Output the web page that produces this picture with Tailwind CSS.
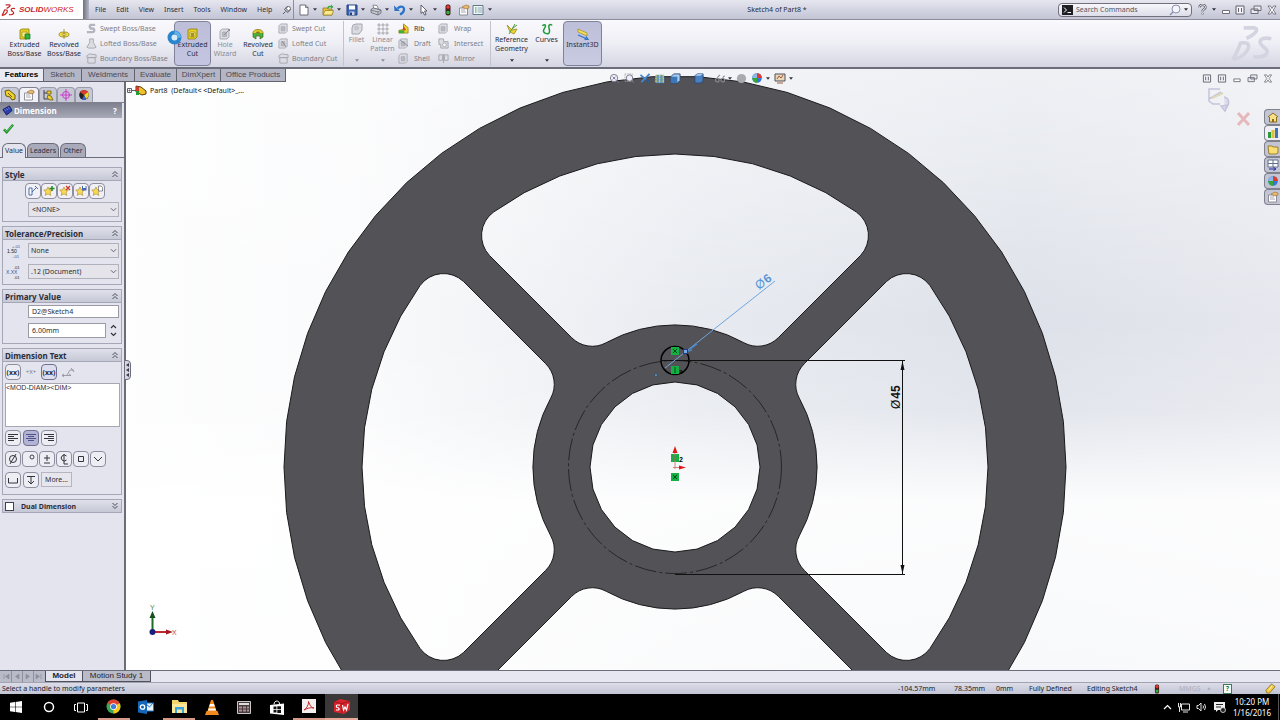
<!DOCTYPE html>
<html lang="en">
  <head>
    <meta charset="UTF-8">
    <meta name="viewport" content="width=device-width, initial-scale=1.0">
    <title>SolidWorks - Sketch4 of Part8</title>
    <script src="https://cdn.jsdelivr.net/npm/@tailwindcss/browser@4"></script>
  </head>

  <body class="h-screen flex flex-col overflow-hidden bg-[#e3e4ee] font-['Noto_Sans',sans-serif] text-[7px] leading-[9px] text-[#2c2d38]">

    <!-- shared icon shapes -->
    <svg class="hidden">
      <symbol id="caret" viewBox="0 0 5 3"><path d="M0 0h5L2.5 3z" fill="currentColor"/></symbol>
      <symbol id="chev" viewBox="0 0 8 5"><path d="M1 1l3 3 3-3" fill="none" stroke="#55565e"/></symbol>
      <symbol id="fold" viewBox="0 0 8 8"><path d="M1.500 4L4 1.500 6.500 4M1.500 7L4 4.500 6.500 7" fill="none" stroke="#4a4b58"/></symbol>
      <symbol id="cube" viewBox="0 0 12 12"><path d="M1 2l2-1h7v8l-2 2H1z" fill="#e8d21c" stroke="#8a7a14" stroke-width=".8"/><path d="M3 4h5v5H3z" fill="#f6ee8a" stroke="#a08c1c" stroke-width=".7"/></symbol>
      <symbol id="graybox" viewBox="0 0 12 12"><path d="M1 3l2-2h7v8l-2 2H1z" fill="#dcdde3" stroke="#a4a5ae" stroke-width=".9"/><path d="M3.500 4h4v4.500h-4z" fill="#b9bac3" stroke="#9fa0aa" stroke-width=".6"/></symbol>
      <symbol id="star" viewBox="0 0 12 12"><path d="M5 2l1.300 2.800 3 .3-2.200 2.100.7 3.200L5 8.800l-2.800 1.600.7-3.200L.7 5.100l3-.3z" fill="#f8d95a" stroke="#b8922a" stroke-width=".7"/></symbol>
      <symbol id="light" viewBox="0 0 6 12"><rect x=".5" y=".5" width="5" height="11" rx="2" fill="#4a2020"/><circle cx="3" cy="3" r="1.800" fill="#e23b2e"/><circle cx="3" cy="8.500" r="1.800" fill="#28b43c"/></symbol>
      <symbol id="ds" viewBox="0 0 16 14"><path d="M5 1.500h4c1.500.4.500 2.200-3 3.800M1 13c1.500-2.500 2.500-5 2.800-6 3-.4 3.600.8 2.400 2.800C5.200 11.500 3 12.700 1 13M15 5.500c-2-.6-4.500-.2-4 1.500s3 1.800 2.500 3.500-3 1.700-5 1.500" fill="none" stroke="currentColor" stroke-width="1.300"/></symbol>
      <symbol id="props" viewBox="0 0 12 12"><path d="M1.500 4h8v7h-8z" fill="#fff" stroke="#777883" stroke-width=".8"/><path d="M3 6h4M3 8h5" stroke="#8f90a0" stroke-width=".8"/><path d="M4 3l4-2 3 1v2L8 5z" fill="#e9b870" stroke="#976d2e" stroke-width=".6"/></symbol>
      <symbol id="ball" viewBox="0 0 12 12"><circle cx="6" cy="6" r="4.800" fill="#3a72d8"/><path d="M6 6V1.200A4.800 4.800 0 0 1 10.800 6z" fill="#e03c2c"/><path d="M6 6H1.200A4.800 4.800 0 0 0 6 10.800z" fill="#35a83a"/><path d="M6 6H1.200A4.800 4.800 0 0 1 6 1.200z" fill="#8bb8e8"/></symbol>
      <symbol id="restore" viewBox="0 0 12 10"><path d="M4 1h7v4.500H4zM1 4h7v4.500H1z" fill="#e9eaf1" stroke="#60616c" stroke-width=".9"/></symbol>
      <symbol id="tile" viewBox="0 0 10 10"><path d="M1 1h8v8H1zM3.500 3v4M6.500 3v4" fill="#f3f3f8" stroke="#60616c"/></symbol>
      <symbol id="mini" viewBox="0 0 10 10"><path d="M1.500 5.500h7v3h-7z" fill="#fff" stroke="#60616c" stroke-width=".9"/></symbol>
      <symbol id="cross" viewBox="0 0 10 10"><path d="M1 1h2.500L5 3.500 6.500 1H9L6.300 5 9 9H6.500L5 6.500 3.500 9H1l2.700-4z" fill="#fff" stroke="#60616c" stroke-width=".8"/></symbol>
    </svg>

    <!-- menu bar -->
    <header class="h-[20px] shrink-0 flex items-center border-b border-[#8d8e9c] bg-linear-to-b from-[#e6e6ef] to-[#c3c5d6] relative">
      <div class="w-[83px] self-stretch flex items-center gap-[3px] pl-px bg-white text-[#c8282c]">
        <svg class="w-[15px] h-[14px]"><use href="#ds"/></svg>
        <span class="text-[8px] font-['Liberation_Sans',sans-serif] italic"><b>SOLID</b>WORKS</span>
      </div>
      <div class="w-[6px] self-stretch bg-linear-to-r from-[#70727f] to-[#b5b7c6]"></div>
      <nav class="flex items-center gap-[10px] pl-[6px] w-[191px]">
        <a href="#">File</a>
        <a href="#">Edit</a>
        <a href="#">View</a>
        <a href="#">Insert</a>
        <a href="#">Tools</a>
        <a href="#">Window</a>
        <a href="#">Help</a>
      </nav>
      <button class="w-[14px] h-full flex items-center justify-center border-r border-[#8d8e9c]" aria-label="Pin"><svg class="w-[10px] h-[10px]" viewBox="0 0 10 10"><path d="M5 1.500l3.500 3-2.500 3-3.500-3zM1 9l2.500-2.500" fill="#dfe0e8" stroke="#55565f"/><circle cx="6.500" cy="3.500" r="2" fill="#fff" stroke="#55565f" stroke-width=".8"/></svg></button>
      <div class="flex items-center pl-[2px] text-[#3a3b46]">
        <button class="w-[24px] flex items-center gap-[3px] pl-[2px]" aria-label="New"><svg class="w-[12px] h-[12px]" viewBox="0 0 12 12"><path d="M2 1h5.500L10 3.500V11H2z" fill="#fff" stroke="#60616c" stroke-width=".9"/><path d="M7.500 1v2.500H10" fill="none" stroke="#60616c" stroke-width=".8"/></svg><svg class="w-[4px] h-[3px]"><use href="#caret"/></svg></button>
        <button class="w-[24px] flex items-center gap-[3px] pl-[2px]" aria-label="Open"><svg class="w-[12px] h-[12px]" viewBox="0 0 12 12"><path d="M1 4h4l1 1h4v6H1z" fill="#e9c53b" stroke="#93781d" stroke-width=".8"/><path d="M1 11l2-4.500h8.500L10 11z" fill="#fbe98b" stroke="#93781d" stroke-width=".7"/><path d="M5 4c1-2 2-2.500 4-2V.500L11.500 3 9 4.800V3.500c-2-.5-2 .5-2.500 1" fill="#36ab36"/></svg><svg class="w-[4px] h-[3px]"><use href="#caret"/></svg></button>
        <button class="w-[24px] flex items-center gap-[3px] pl-[2px]" aria-label="Save"><svg class="w-[12px] h-[12px]" viewBox="0 0 12 12"><path d="M1 1h10v10H1z" fill="#3c66b4" stroke="#20407e"/><path d="M3 1.500h6v4H3z" fill="#fff"/><path d="M3.500 7.500h5V11h-5z" fill="#c9d3e8"/><path d="M4 8.500h2V11H4z" fill="#20407e"/></svg><svg class="w-[4px] h-[3px]"><use href="#caret"/></svg></button>
        <button class="w-[24px] flex items-center gap-[3px] pl-[2px]" aria-label="Print"><svg class="w-[12px] h-[12px]" viewBox="0 0 12 12"><path d="M3 1l4 .5L8.500 5 4 5z" fill="#fff" stroke="#74757f" stroke-width=".8"/><path d="M1 5.500L3.500 4 11 6v3L8 11 1 8.500z" fill="#c9cad2" stroke="#60616c" stroke-width=".8"/><path d="M1 6l7 2 3-2M8 8v3" fill="none" stroke="#60616c" stroke-width=".7"/></svg><svg class="w-[4px] h-[3px]"><use href="#caret"/></svg></button>
        <button class="w-[24px] flex items-center gap-[3px] pl-[2px]" aria-label="Undo"><svg class="w-[12px] h-[12px]" viewBox="0 0 12 12"><path d="M3.500 4.500C7 1 10.500 3 10 6c-.3 2.200-2 3.500-4 4.500" fill="none" stroke="#2a72c8" stroke-width="2.200"/><path d="M0 1.500L6 7H.5z" fill="#2a72c8"/></svg><svg class="w-[4px] h-[3px]"><use href="#caret"/></svg></button>
        <button class="w-[24px] flex items-center gap-[3px] pl-[2px]" aria-label="Select"><svg class="w-[12px] h-[12px]" viewBox="0 0 12 12"><path d="M3 1l6 6H6.500L8 10.500l-1.500.6L5 7.800 3 9.500z" fill="#fff" stroke="#50515c" stroke-width=".9"/></svg><svg class="w-[4px] h-[3px]"><use href="#caret"/></svg></button>
        <button class="w-[15px] flex justify-center" aria-label="Rebuild"><svg class="w-[6px] h-[12px]"><use href="#light"/></svg></button>
        <button class="w-[17px] flex justify-center" aria-label="File properties"><svg class="w-[12px] h-[12px]"><use href="#props"/></svg></button>
        <button class="flex items-center gap-[4px]" aria-label="Options"><svg class="w-[12px] h-[12px]" viewBox="0 0 12 12"><path d="M1 1.500h10v9H1z" fill="#f4f8fa" stroke="#5d7a88"/><path d="M3 4h1.500M3 6h1.500M3 8h1.500" stroke="#2e9a4a" stroke-width="1.200"/><path d="M5.500 4H10M5.500 6H10M5.500 8H10" stroke="#7390a8" stroke-width=".8"/></svg><svg class="w-[4px] h-[3px]"><use href="#caret"/></svg></button>
      </div>
      <h1 class="flex-1 text-center pl-[4px]">Sketch4 of Part8 *</h1>
      <label class="w-[134px] h-[14px] flex items-center gap-[3px] px-[3px] rounded-sm border border-[#70717d] bg-linear-to-b from-[#f7f7fb] to-[#dcdde8]">
        <svg class="w-[11px] h-[10px] shrink-0" viewBox="0 0 11 10"><path d="M0 0h11v10H0z" fill="#1e1f24"/><path d="M2 2.500L4.500 5 2 7.500M5.500 7.500H9" fill="none" stroke="#fff"/></svg>
        <input type="text" placeholder="Search Commands" class="flex-1 min-w-0 bg-transparent placeholder-[#555661] focus:outline-none">
        <svg class="w-[12px] h-[12px] shrink-0" viewBox="0 0 12 12"><circle cx="7" cy="5" r="4" fill="#f4f6fc" stroke="#8b91ad"/><path d="M4 8l-3 3" stroke="#8b91ad" stroke-width="1.500"/></svg>
        <svg class="w-[4px] h-[3px] shrink-0"><use href="#caret"/></svg>
      </label>
      <div class="flex items-center justify-between w-[84px] pl-[5px] ml-[1px] mr-[3px]">
        <button aria-label="Help" class="w-[9px]"><svg class="w-[9px] h-[11px]" viewBox="0 0 9 11"><path d="M1.500 3.500C1.500 0 7.500 0 7.500 3.200 7.500 5.500 4.500 5 4.500 7.500" fill="none" stroke="#60616c" stroke-width="2.400"/><path d="M1.500 3.500C1.500 0 7.500 0 7.500 3.200 7.500 5.500 4.500 5 4.500 7.500" fill="none" stroke="#fff" stroke-width=".9"/><circle cx="4.500" cy="9.700" r="1" fill="#fff" stroke="#60616c" stroke-width=".6"/></svg></button>
        <svg class="w-[4px] h-[3px]"><use href="#caret"/></svg>
        <button aria-label="Minimize"><svg class="w-[10px] h-[10px]"><use href="#mini"/></svg></button>
        <button aria-label="Tile"><svg class="w-[10px] h-[10px]"><use href="#tile"/></svg></button>
        <button aria-label="Restore"><svg class="w-[12px] h-[10px]"><use href="#restore"/></svg></button>
        <button aria-label="Close"><svg class="w-[10px] h-[10px]"><use href="#cross"/></svg></button>
      </div>
    </header>

    <!-- ribbon -->
    <section class="h-[49px] shrink-0 flex pl-[5px] py-px border-b-2 border-[#6c6d7a] bg-linear-to-b from-[#fafafd] via-[#eeeef5] to-[#d5d6e3] relative">
      <button class="w-[39px] pt-[7px] flex flex-col items-center"><svg class="w-[12px] h-[12px]"><use href="#cube"/><path d="M6 6h5v5H6z" fill="#2eb43c" stroke="#14701e" stroke-width=".7"/></svg>Extruded<br>Boss/Base</button>
      <button class="w-[40px] pt-[7px] flex flex-col items-center"><svg class="w-[12px] h-[12px]" viewBox="0 0 12 12"><ellipse cx="6" cy="6.500" rx="5" ry="2.500" fill="#f1da3a" stroke="#94801c" stroke-width=".8"/><ellipse cx="6" cy="6.500" rx="1.800" ry="1" fill="#fff" stroke="#94801c" stroke-width=".6"/><path d="M6 1v10" stroke="#8b8026" stroke-width=".7"/></svg>Revolved<br>Boss/Base</button>
      <div class="w-[90px] pl-[2px] flex flex-col justify-around text-[#7c7d88]">
        <button class="flex items-center gap-[3px]"><svg class="w-[11px] h-[11px]" viewBox="0 0 12 12"><path d="M10 2H5a3 3 0 0 0 0 4h2a2 2 0 0 1 0 4H1" fill="none" stroke="#b3b4bd" stroke-width="2.500"/></svg>Swept Boss/Base</button>
        <button class="flex items-center gap-[3px]"><svg class="w-[11px] h-[11px]" viewBox="0 0 12 12"><path d="M4 1h4v4l3 5-2 1H3l-2-1 3-5z" fill="#dcdde3" stroke="#a4a5ae"/></svg>Lofted Boss/Base</button>
        <button class="flex items-center gap-[3px]"><svg class="w-[11px] h-[11px]" viewBox="0 0 12 12"><path d="M1 3l3-2 7 1v3H1zM2 5h8v6H2z" fill="#dcdde3" stroke="#a4a5ae"/></svg>Boundary Boss/Base</button>
      </div>
      <button class="w-[37px] pt-[6px] flex flex-col items-center rounded-sm border border-[#80819a] bg-linear-to-b from-[#bdbfd9] to-[#c3c5e2]"><svg class="w-[12px] h-[12px]"><use href="#cube"/><path d="M4 5h3v4H4z" fill="#a8921c"/></svg>Extruded<br>Cut</button>
      <button class="w-[28px] pt-[7px] flex flex-col items-center text-[#8a8b96]"><svg class="w-[12px] h-[12px]"><use href="#graybox"/><path d="M11 1L5 7M9 1l2 2" stroke="#8d8e98"/></svg>Hole<br>Wizard</button>
      <button class="w-[38px] pt-[7px] flex flex-col items-center"><svg class="w-[12px] h-[12px]" viewBox="0 0 12 12"><ellipse cx="6" cy="4.500" rx="5" ry="3" fill="#e6cf28" stroke="#867416" stroke-width=".8"/><path d="M1 5v4l3 2V8h4v3l3-2V5" fill="#4eb03c" stroke="#3c6c1c" stroke-width=".7"/><ellipse cx="6" cy="4.500" rx="2" ry="1" fill="#8a781c"/></svg>Revolved<br>Cut</button>
      <div class="w-[67px] pl-[1px] flex flex-col justify-around text-[#7c7d88] border-r border-[#c2c3cf]">
        <button class="flex items-center gap-[3px]"><svg class="w-[11px] h-[11px]"><use href="#graybox"/></svg>Swept Cut</button>
        <button class="flex items-center gap-[3px]"><svg class="w-[11px] h-[11px]"><use href="#graybox"/><path d="M4 3l4 6" stroke="#8f909a"/></svg>Lofted Cut</button>
        <button class="flex items-center gap-[3px]"><svg class="w-[11px] h-[11px]" viewBox="0 0 12 12"><path d="M1 3l3-2 7 1v3H1zM2 5h8v6H2z" fill="#dcdde3" stroke="#a4a5ae"/></svg>Boundary Cut</button>
      </div>
      <button class="w-[25px] pt-[2px] flex flex-col items-center text-[#8a8b96]"><svg class="w-[12px] h-[12px]" viewBox="0 0 12 12"><path d="M1 11V5a4 4 0 0 1 4-4h6v6L8 11z" fill="#dcdde3" stroke="#a4a5ae"/><circle cx="5.500" cy="5" r="2.500" fill="#c4c5cd"/></svg>Fillet<svg class="w-[4px] h-[3px] mt-auto mb-[4px]"><use href="#caret"/></svg></button>
      <button class="w-[27px] pt-[2px] flex flex-col items-center text-[#8a8b96]"><svg class="w-[12px] h-[12px]" viewBox="0 0 12 12"><path d="M1 1h2v2H1zM5 1h2v2H5zM9 1h2v2H9zM1 5h2v2H1zM5 5h2v2H5zM9 5h2v2H9zM1 9h2v2H1zM5 9h2v2H5zM9 9h2v2H9z" fill="#ddd" stroke="#a4a5ae" stroke-width=".8"/></svg>Linear<br>Pattern<svg class="w-[4px] h-[3px] mt-auto mb-[4px]"><use href="#caret"/></svg></button>
      <div class="w-[42px] pl-[2px] flex flex-col justify-around text-[#7c7d88]">
        <button class="flex items-center gap-[5px] text-[#2c2d38]"><svg class="w-[11px] h-[11px]" viewBox="0 0 12 12"><path d="M1 8l5-1V1l5 4v6H1z" fill="#f0d424" stroke="#8c7a14" stroke-width=".8"/><path d="M1 8l6 0v3H1z" fill="#3caf3a"/><path d="M6 3l3 5H5z" fill="#d4452a"/></svg>Rib</button>
        <button class="flex items-center gap-[5px]"><svg class="w-[11px] h-[11px]"><use href="#graybox"/><path d="M2 2l8 6" stroke="#8f909a"/></svg>Draft</button>
        <button class="flex items-center gap-[5px]"><svg class="w-[11px] h-[11px]"><use href="#graybox"/></svg>Shell</button>
      </div>
      <div class="w-[53px] flex flex-col justify-around text-[#7c7d88] border-r border-[#c2c3cf]">
        <button class="flex items-center gap-[5px]"><svg class="w-[11px] h-[11px]"><use href="#graybox"/></svg>Wrap</button>
        <button class="flex items-center gap-[5px]"><svg class="w-[11px] h-[11px]" viewBox="0 0 12 12"><path d="M1 1h5v3h5v7H3V7H1z" fill="#dcdde3" stroke="#a4a5ae"/><circle cx="7" cy="7.500" r="2" fill="#fff" stroke="#a4a5ae"/></svg>Intersect</button>
        <button class="flex items-center gap-[5px]"><svg class="w-[11px] h-[11px]" viewBox="0 0 12 12"><path d="M1 2h4v6H1zM7 2h4v6H7zM6 1v10" fill="#dcdde3" stroke="#a4a5ae"/></svg>Mirror</button>
      </div>
      <button class="w-[41px] pt-[2px] flex flex-col items-center"><svg class="w-[12px] h-[12px]" viewBox="0 0 12 12"><path d="M1 2l5 5 5-1-3 5-4-2z" fill="#ecd52c" stroke="#8f7d18" stroke-width=".7"/><path d="M6 6l3-5M6 6l5-4M6 6L3 11" stroke="#4f9a3a"/></svg>Reference<br>Geometry<svg class="w-[4px] h-[3px] mt-auto mb-[4px]"><use href="#caret"/></svg></button>
      <button class="w-[29px] pt-[2px] flex flex-col items-center"><svg class="w-[12px] h-[12px]" viewBox="0 0 12 12"><path d="M1.500 3c1-2 3-1.500 3 0S2 6.500 2.500 8.500 8 12 8.500 9 7 4 8 2.500 10.500 1 11 2.500" fill="none" stroke="#1f9a38" stroke-width="1.500"/></svg>Curves<svg class="w-[4px] h-[3px] mt-auto mb-[4px]"><use href="#caret"/></svg></button>
      <button class="w-[39px] ml-[2px] pt-[6px] flex flex-col items-center rounded-sm border border-[#80819a] bg-linear-to-b from-[#bdbfd9] to-[#c9cbe2]"><svg class="w-[12px] h-[12px]" viewBox="0 0 12 12"><path d="M1 1l9 4v3L1 4z" fill="#f1df5c" stroke="#9b8a2a" stroke-width=".7"/><path d="M1 7l8 3.500M9 8.500l2 3-3.500-.3" fill="none" stroke="#2a72c8" stroke-width="1.300"/></svg>Instant3D</button>
      <!-- busy pointer -->
      <svg class="absolute left-[167px] top-[10px] w-[15px] h-[15px]" viewBox="0 0 15 15"><circle cx="7.500" cy="7.500" r="5" fill="#d6ecf8" stroke="#2b86cc" stroke-width="4"/><path d="M7.500 2.500a5 5 0 0 1 5 5" fill="none" stroke="#62b4ea" stroke-width="3"/></svg>
      <svg class="absolute right-[6px] top-0 w-[44px] h-[46px] text-[#d3d4df]"><use href="#ds"/></svg>
    </section>

    <main class="flex-1 min-h-0 flex relative">

      <!-- command manager tabs, laid over the panel and the graphics area -->
      <nav class="absolute left-0 top-0 z-10 flex h-[13px] font-['Liberation_Sans',sans-serif] text-[8px] leading-[12px] text-center text-[#484955]">
        <a href="#" class="w-[44px] bg-[#e9eaf2] border-b border-r border-[#62636f] font-bold text-black">Features</a>
        <a href="#" class="w-[38px] bg-[#b4b6c5] border-b border-r border-[#62636f]">Sketch</a>
        <a href="#" class="w-[53px] bg-[#b4b6c5] border-b border-r border-[#62636f]">Weldments</a>
        <a href="#" class="w-[42px] bg-[#b4b6c5] border-b border-r border-[#62636f]">Evaluate</a>
        <a href="#" class="w-[44px] bg-[#b4b6c5] border-b border-r border-[#62636f]">DimXpert</a>
        <a href="#" class="w-[65px] bg-[#b4b6c5] border-b border-r border-[#62636f]">Office Products</a>
      </nav>

      <!-- property manager -->
      <aside class="w-[126px] shrink-0 pt-[18px] border-r-2 border-[#6c6d7a] bg-[#e3e4ee]">
        <div class="flex h-[16px] pl-px border-b border-[#80818f]">
          <button class="w-[18px] flex justify-center items-center rounded-t border border-b-0 border-[#9a9ba9] bg-[#c6c8d6]" aria-label="Feature tree"><svg class="w-[12px] h-[12px]" viewBox="0 0 12 12"><path d="M1 2l4-1 6 5v4l-3 1-2-3-4-1z" fill="#efcf2a" stroke="#6a5a10"/><path d="M4 4l4 4" stroke="#6a5a10"/></svg></button>
          <button class="w-[20px] flex justify-center items-center rounded-t border border-b-0 border-[#80818f] bg-[#f1f1f7]" aria-label="Properties"><svg class="w-[12px] h-[12px]"><use href="#props"/></svg></button>
          <button class="w-[18px] flex justify-center items-center rounded-t border border-b-0 border-[#9a9ba9] bg-[#c6c8d6]" aria-label="Configurations"><svg class="w-[12px] h-[12px]" viewBox="0 0 12 12"><path d="M2 1v9h5M2 4h4" fill="none" stroke="#40414c"/><path d="M5 2h4v3H5zM6 6l3 1 2 4H8L5 9z" fill="#efcf2a" stroke="#6a5a10" stroke-width=".8"/></svg></button>
          <button class="w-[18px] flex justify-center items-center rounded-t border border-b-0 border-[#9a9ba9] bg-[#c6c8d6]" aria-label="DimXpert"><svg class="w-[12px] h-[12px]" viewBox="0 0 12 12"><circle cx="6" cy="6" r="3.500" fill="none" stroke="#c93cc9"/><path d="M6 0v12M0 6h12" stroke="#c93cc9"/></svg></button>
          <button class="w-[18px] flex justify-center items-center rounded-t border border-b-0 border-[#9a9ba9] bg-[#c6c8d6]" aria-label="Display"><svg class="w-[12px] h-[12px]" viewBox="0 0 12 12"><circle cx="6" cy="6" r="4.800" fill="#222"/><path d="M6 6L2 3a5 5 0 0 1 8 0z" fill="#e03c2c"/><path d="M6 6l4-3a5 5 0 0 1-2 7z" fill="#f0d42a"/><path d="M6 6l2 4.500a5 5 0 0 1-4 0z" fill="#3a62d8"/></svg></button>
        </div>
        <div class="flex items-center h-[15px] mr-[2px] px-[2px] bg-linear-to-b from-[#7f808f] to-[#a9aab8] text-white font-bold text-[8px]">
          <svg class="w-[11px] h-[11px] mr-px" viewBox="0 0 12 12"><path d="M1 5l7-4 3 5-6 5z" fill="#2a3fae" stroke="#141c60"/><path d="M3 5l1 1M5 4l1 1M7 3l1 1" stroke="#fff" stroke-width=".7"/></svg>
          <h2 class="flex-1">Dimension</h2>
          <button class="w-[10px]" aria-label="Help">?</button>
        </div>
        <button class="block pl-[3px] pb-[5px] h-[25px]" aria-label="OK"><svg class="w-[11px] h-[11px]" viewBox="0 0 12 12"><path d="M1 7l3 3 7-8" fill="none" stroke="#1f8a2c" stroke-width="2.600"/><path d="M1.500 7L4 9.500 10.500 2.500" fill="none" stroke="#63d45e"/></svg></button>
        <div class="flex gap-px h-[15px] pl-[2px] border-b border-[#6c6d7a] text-center leading-[14px]">
          <button class="w-[24px] h-[15px] rounded-t-md border border-b-0 border-[#6c6d7a] bg-[#e3e4ee]">Value</button>
          <button class="w-[32px] rounded-t-md border border-b-0 border-[#6c6d7a] bg-[#a9abbb]">Leaders</button>
          <button class="w-[26px] rounded-t-md border border-b-0 border-[#6c6d7a] bg-[#a9abbb]">Other</button>
        </div>

        <div class="flex flex-col gap-[4px] pt-[9px] pl-[2px] pr-[2px]">
          <section class="h-[55px] border border-[#a6a7b6]">
            <h3 class="h-[13px] flex items-center justify-between px-[2px] text-[8px] font-bold border-b border-[#a6a7b6] bg-linear-to-b from-[#dfe0ea] to-[#c6c8d6]">Style<svg class="w-[8px] h-[8px]"><use href="#fold"/></svg></h3>
            <div class="flex pl-[22px] pt-[2px]">
              <button class="w-[16px] h-[16px] flex items-center justify-center rounded-sm border border-[#8d8e9e] bg-[#f0f0f6]" aria-label="Apply default"><svg class="w-[12px] h-[12px]" viewBox="0 0 12 12"><path d="M2 3h3v7H2zM5 7l5-5M8 1l3 3" fill="#fff" stroke="#4a6aa8"/></svg></button>
              <button class="w-[16px] h-[16px] flex items-center justify-center rounded-sm border border-[#8d8e9e] bg-[#f0f0f6]" aria-label="Add style"><svg class="w-[12px] h-[12px]"><use href="#star"/><path d="M9 1v5M6.500 3.500h5" stroke="#1f8a2c" stroke-width="1.500"/></svg></button>
              <button class="w-[16px] h-[16px] flex items-center justify-center rounded-sm border border-[#8d8e9e] bg-[#f0f0f6]" aria-label="Delete style"><svg class="w-[12px] h-[12px]"><use href="#star"/><path d="M7 1l4 4M11 1L7 5" stroke="#d0342c" stroke-width="1.200"/></svg></button>
              <button class="w-[16px] h-[16px] flex items-center justify-center rounded-sm border border-[#8d8e9e] bg-[#f0f0f6]" aria-label="Save style"><svg class="w-[12px] h-[12px]"><use href="#star"/><path d="M7 1h4.500v4.500H7z" fill="#4468b8"/><path d="M8 1h2.500v2H8z" fill="#fff"/></svg></button>
              <button class="w-[16px] h-[16px] flex items-center justify-center rounded-sm border border-[#8d8e9e] bg-[#f0f0f6]" aria-label="Load style"><svg class="w-[12px] h-[12px]"><use href="#star"/><path d="M7.500 1H10l1.500 1.500V6h-4z" fill="#fff" stroke="#60616c" stroke-width=".7"/></svg></button>
            </div>
            <div class="relative ml-[25px] mr-[2px] mt-[3px]">
              <select aria-label="Style" class="appearance-none w-full h-[15px] pl-[3px] border border-[#b0b1bb] bg-[#e4e4ea]"><option>&lt;NONE&gt;</option></select>
              <svg class="absolute right-[2px] top-[5px] w-[7px] h-[5px]"><use href="#chev"/></svg>
            </div>
          </section>

          <section class="h-[59px] border border-[#a6a7b6]">
            <h3 class="h-[13px] flex items-center justify-between px-[2px] text-[8px] font-bold border-b border-[#a6a7b6] bg-linear-to-b from-[#dfe0ea] to-[#c6c8d6]">Tolerance/Precision<svg class="w-[8px] h-[8px]"><use href="#fold"/></svg></h3>
            <div class="flex items-center pl-[3px] pr-[2px] mt-[3px]">
              <svg class="w-[16px] h-[14px] mr-[6px] font-['Liberation_Sans',sans-serif]" fill="#2457a0"><text x="1" y="9" font-size="5" fill="#222">1.50</text><text x="6" y="4" font-size="4">+.01</text><text x="6" y="14" font-size="4">-.01</text></svg>
              <div class="relative flex-1">
                <select aria-label="Tolerance type" class="appearance-none w-full h-[15px] pl-[2px] border border-[#b0b1bb] bg-[#e4e4ea]"><option>None</option></select>
                <svg class="absolute right-[2px] top-[5px] w-[7px] h-[5px]"><use href="#chev"/></svg>
              </div>
            </div>
            <div class="flex items-center pl-[3px] pr-[2px] mt-[6px]">
              <svg class="w-[16px] h-[14px] mr-[6px] font-['Liberation_Sans',sans-serif]" fill="#2457a0"><text x="0" y="9" font-size="5">X.XX</text><text x="8" y="4" font-size="4" fill="#222">.01</text><text x="8" y="14" font-size="4" fill="#222">.01</text></svg>
              <div class="relative flex-1">
                <select aria-label="Unit precision" class="appearance-none w-full h-[15px] pl-[2px] border border-[#b0b1bb] bg-[#e4e4ea]"><option>.12 (Document)</option></select>
                <svg class="absolute right-[2px] top-[5px] w-[7px] h-[5px]"><use href="#chev"/></svg>
              </div>
            </div>
          </section>

          <section class="h-[55px] border border-[#a6a7b6]">
            <h3 class="h-[13px] flex items-center justify-between px-[2px] text-[8px] font-bold border-b border-[#a6a7b6] bg-linear-to-b from-[#dfe0ea] to-[#c6c8d6]">Primary Value<svg class="w-[8px] h-[8px]"><use href="#fold"/></svg></h3>
            <div class="pl-[25px] pr-[2px] pt-[2px]">
              <input type="text" aria-label="Name" value="D2@Sketch4" class="block w-full h-[13px] px-[3px] border border-[#9a9ba6] bg-white">
              <div class="flex mt-[5px]">
                <input type="text" aria-label="Value" value="6.00mm" class="w-[78px] h-[15px] px-[3px] border border-[#9a9ba6] bg-white">
                <button class="ml-[4px]" aria-label="Step"><svg class="w-[7px] h-[13px]" viewBox="0 0 7 13"><path d="M1 4l2.500-2.500L6 4M1 9l2.500 2.500L6 9" fill="none" stroke="#33343e" stroke-width="1.200"/></svg></button>
              </div>
            </div>
          </section>

          <section class="h-[147px] border border-[#a6a7b6]">
            <h3 class="h-[13px] flex items-center justify-between px-[2px] text-[8px] font-bold border-b border-[#a6a7b6] bg-linear-to-b from-[#dfe0ea] to-[#c6c8d6]">Dimension Text<svg class="w-[8px] h-[8px]"><use href="#fold"/></svg></h3>
            <div class="flex items-center gap-[2px] pl-[2px] pt-[2px] text-center">
              <button class="w-[16px] h-[16px] rounded border border-[#8d8e9e] bg-[#ededf4] font-bold">(xx)</button>
              <button class="w-[16px] h-[16px] text-[6px] text-[#7c7d88]">+X+</button>
              <button class="w-[16px] h-[16px] rounded border border-[#6f7090] bg-[#dcdded] font-bold">(xx)</button>
              <button class="w-[18px] h-[16px] flex items-center justify-center" aria-label="Offset text"><svg class="w-[13px] h-[9px]" viewBox="0 0 13 9"><path d="M0 7.500h9M9 7.500l-2-1.500M2 6L0 7.500 2 9M5 7l3-5h4M9 0l3 4" fill="none" stroke="#8a8b96" stroke-width=".8"/></svg></button>
            </div>
            <textarea aria-label="Dimension text" class="block w-[115px] h-[44px] ml-[2px] mt-[3px] resize-none border border-[#a6a7b0] bg-white font-['Liberation_Sans',sans-serif] leading-[8px]">&lt;MOD-DIAM&gt;&lt;DIM&gt;</textarea>
            <div class="flex gap-[2px] pl-[2px] mt-[3px]">
              <button class="w-[16px] h-[16px] flex items-center justify-center rounded border border-[#8d8e9e] bg-[#ededf4]" aria-label="Left"><svg class="w-[10px] h-[8px]" viewBox="0 0 10 8"><path d="M0 .5h10M0 2.500h6M0 4.500h10M0 6.500h6" stroke="#33343e"/></svg></button>
              <button class="w-[16px] h-[16px] flex items-center justify-center rounded border border-[#6f7090] bg-[#b3b4d4]" aria-label="Center"><svg class="w-[10px] h-[8px]" viewBox="0 0 10 8"><path d="M0 .5h10M2 2.500h6M0 4.500h10M2 6.500h6" stroke="#50518c"/></svg></button>
              <button class="w-[16px] h-[16px] flex items-center justify-center rounded border border-[#8d8e9e] bg-[#ededf4]" aria-label="Right"><svg class="w-[10px] h-[8px]" viewBox="0 0 10 8"><path d="M0 .5h10M4 2.500h6M0 4.500h10M4 6.500h6" stroke="#33343e"/></svg></button>
            </div>
            <div class="flex gap-px pl-[2px] mt-[5px]">
              <button class="w-[16px] h-[16px] flex items-center justify-center rounded border border-[#8d8e9e] bg-[#ededf4]" aria-label="Diameter"><svg class="w-[12px] h-[12px]" viewBox="0 0 12 12"><circle cx="6" cy="6" r="3.500" fill="none" stroke="#33343e"/><path d="M3 11L9 1" stroke="#33343e"/></svg></button>
              <button class="w-[16px] h-[16px] flex items-center justify-center rounded border border-[#8d8e9e] bg-[#ededf4]" aria-label="Degree"><svg class="w-[12px] h-[12px]" viewBox="0 0 12 12"><circle cx="8" cy="4" r="2" fill="none" stroke="#33343e" stroke-width=".9"/></svg></button>
              <button class="w-[16px] h-[16px] flex items-center justify-center rounded border border-[#8d8e9e] bg-[#ededf4]" aria-label="Plus or minus"><svg class="w-[12px] h-[12px]" viewBox="0 0 12 12"><path d="M3 5h6M6 2v6M3 10h6" stroke="#33343e"/></svg></button>
              <button class="w-[16px] h-[16px] flex items-center justify-center rounded border border-[#8d8e9e] bg-[#ededf4]" aria-label="Centerline"><svg class="w-[12px] h-[12px]" viewBox="0 0 12 12"><path d="M8.500 3a3 3 0 1 0 0 4M6 1v10h4" fill="none" stroke="#33343e"/></svg></button>
              <button class="w-[16px] h-[16px] flex items-center justify-center rounded border border-[#8d8e9e] bg-[#ededf4]" aria-label="Square"><svg class="w-[12px] h-[12px]" viewBox="0 0 12 12"><path d="M3.500 3.500h5v5h-5z" fill="none" stroke="#33343e"/></svg></button>
              <button class="w-[16px] h-[16px] flex items-center justify-center rounded border border-[#8d8e9e] bg-[#ededf4]" aria-label="More symbols"><svg class="w-[12px] h-[12px]" viewBox="0 0 12 12"><path d="M2 4l4 4 4-4" fill="none" stroke="#33343e"/></svg></button>
            </div>
            <div class="flex gap-[2px] pl-[2px] mt-[5px]">
              <button class="w-[16px] h-[16px] flex items-center justify-center rounded border border-[#8d8e9e] bg-[#ededf4]" aria-label="Counterbore"><svg class="w-[12px] h-[12px]" viewBox="0 0 12 12"><path d="M1.500 4v5h9V4" fill="none" stroke="#33343e"/></svg></button>
              <button class="w-[16px] h-[16px] flex items-center justify-center rounded border border-[#8d8e9e] bg-[#ededf4]" aria-label="Depth"><svg class="w-[12px] h-[12px]" viewBox="0 0 12 12"><path d="M2 2.500h8M6 2.500V10M3 7l3 3 3-3" fill="none" stroke="#33343e"/></svg></button>
              <button class="w-[31px] h-[15px] border border-[#b4b5c0] bg-[#e6e6ec]">More...</button>
            </div>
          </section>

          <section class="h-[14px] flex items-center px-[2px] border border-[#a6a7b6] bg-linear-to-b from-[#dfe0ea] to-[#c6c8d6] font-bold">
            <input type="checkbox" id="dual" class="appearance-none w-[9px] h-[9px] border border-[#40414c] bg-white">
            <label for="dual" class="flex-1 pl-[7px]">Dual Dimension</label>
            <svg class="w-[8px] h-[8px] rotate-180"><use href="#fold"/></svg>
          </section>
        </div>
      </aside>

      <!-- graphics area -->
      <div class="flex-1 min-w-0 relative bg-white">
        <svg class="w-full h-full" viewBox="126 69 1154 601" preserveAspectRatio="xMidYMid slice">
          <defs>
            <linearGradient id="across"><stop offset="0" stop-color="#dde1e9" stop-opacity=".05"/><stop offset=".2" stop-color="#dde1e9" stop-opacity=".15"/><stop offset=".5" stop-color="#dde1e9" stop-opacity=".7"/><stop offset=".78" stop-color="#dde1e9"/><stop offset="1" stop-color="#e6e7ee"/></linearGradient>
            <linearGradient id="down" x2="0" y2="1"><stop offset="0" stop-color="#fff" stop-opacity=".5"/><stop offset=".15" stop-color="#fff" stop-opacity=".35"/><stop offset=".42" stop-color="#fff" stop-opacity="0"/><stop offset=".57" stop-color="#fff" stop-opacity=".15"/><stop offset=".72" stop-color="#fff" stop-opacity=".9"/><stop offset="1" stop-color="#fff" stop-opacity=".8"/></linearGradient>
            <path id="window" d="M-181.400-255L-150.800-274.300L-115.200-291L-77.800-303.200L-39.200-310.500L0-313L39.200-310.500L77.800-303.200L115.200-291L150.800-274.300L181.400-255A29 29 0 0 1 185.500-211.500L103.500-129.500A29 29 0 0 1 68.800-124.300A142 142 0 0 0-68.800-124.300A29 29 0 0 1-103.500-129.500L-185.500-211.500A29 29 0 0 1-181.400-255Z"/>
            <mask id="holes">
              <rect x="-500" y="-500" width="1000" height="1000" fill="#fff"/>
              <use href="#window"/>
              <use href="#window" transform="rotate(90)"/>
              <use href="#window" transform="rotate(180)"/>
              <use href="#window" transform="rotate(270)"/>
              <polygon data-radius="85" data-sides="24"/>
            </mask>
          </defs>
          <rect x="126" y="69" width="1154" height="601" fill="url(#across)"/>
          <rect x="126" y="69" width="1154" height="601" fill="url(#down)"/>

          <!-- wheel, drawn round its own centre -->
          <g transform="translate(675 467)">
            <polygon data-radius="391" data-sides="54" fill="#535357" mask="url(#holes)"/>
            <g fill="none" stroke="#1a1a1c">
              <polygon data-radius="391" data-sides="54"/>
              <polygon data-radius="85" data-sides="24"/>
              <use href="#window"/>
              <use href="#window" transform="rotate(90)"/>
              <use href="#window" transform="rotate(180)"/>
              <use href="#window" transform="rotate(270)"/>
              <circle r="106.500" stroke-width=".8" stroke-dasharray="22 3 3 3"/>
            </g>
          </g>

          <!-- sketch circle and its dimensions -->
          <circle cx="675" cy="360.500" r="14" fill="none" stroke="#000" stroke-width="1.500"/>
          <path d="M661 360.500H905M675 574.500H905M902.500 361V574" stroke="#111" fill="none"/>
          <path d="M902.500 361l-2 9h4zM902.500 574l-2-9h4z" fill="#111"/>
          <text transform="translate(900 409) rotate(-90)" font-family="Liberation Sans" font-size="12" fill="#111">Ø<tspan font-weight="bold" dx="1">45</tspan></text>
          <path d="M665 368L775 281" stroke="#6fa5dc" fill="none"/>
          <path d="M690 349l7-5M688 351l4-1" stroke="#4a8ad0" stroke-width="1.500"/>
          <text transform="translate(759 290) rotate(-38)" font-family="Liberation Sans" font-size="12" fill="#5596d8">Ø<tspan font-weight="bold" dx="1">6</tspan></text>
          <rect x="683.500" y="349.500" width="4" height="4" fill="#7aa8e8" stroke="#1c3c84"/>
          <circle cx="656" cy="375" r="1.500" fill="#6f9cb8" stroke="#24486a" stroke-width=".8"/>
          <g fill="#14b043">
            <rect x="671" y="347" width="8" height="8"/><rect x="671" y="366" width="8" height="8"/>
            <rect x="671" y="454" width="8" height="8"/><rect x="671" y="473" width="8" height="8"/>
          </g>
          <path d="M673 353l4-4M673 349l4 4M675 367v6M675 455v6M673 479l4-4M673 475l4 4" stroke="#064a1c"/>
          <text x="679" y="374" font-family="Liberation Sans" font-size="6" font-weight="bold">2</text>
          <text x="679" y="462" font-family="Liberation Sans" font-size="7" font-weight="bold">2</text>
          <path d="M675 469V449M673 467.500H683" stroke="#d88080" fill="none"/>
          <path d="M675 446l-2.500 7h5zM686 467.500l-7-2v4z" fill="#e01818"/>

          <!-- view triad -->
          <path d="M152.500 632V616" stroke="#1c6a28" stroke-width="2"/>
          <path d="M152.500 611l-3 7h6z" fill="#14501c"/>
          <path d="M153 632h15" stroke="#c02830" stroke-width="2"/>
          <path d="M173 632l-7-2.500v5z" fill="#a01820"/>
          <circle cx="152.500" cy="632" r="3" fill="#18207c"/>
          <text x="150" y="610" font-family="Liberation Sans" font-size="7" fill="#3a8a48">Y</text>
          <text x="172" y="635" font-family="Liberation Sans" font-size="7" fill="#d04850">X</text>
        </svg>

        <!-- flyout feature tree -->
        <div class="absolute left-px top-[16px] flex items-center gap-[2px] text-[#222]">
          <svg class="w-[20px] h-[11px]" viewBox="0 0 20 11"><path d="M.5 3.500h4v4h-4zM1.500 5.500h2M2.500 4.500v2M5 5.500h5" fill="none" stroke="#60616c"/><path d="M9 1l5 1 5 4v3l-4 1-6-3z" fill="#efc22a" stroke="#5a3c10"/><path d="M9 2h3v4H9z" fill="#d03c2c"/><path d="M9 6h3v4H9z" fill="#279a38"/></svg>
          <span class="pl-px">Part8&nbsp; (Default&lt; &lt;Default&gt;_...</span>
        </div>

        <!-- heads-up view toolbar -->
        <div class="absolute left-[483px] top-[3px] flex items-center gap-[4px] text-[#33343e]">
          <button aria-label="Zoom to fit"><svg class="w-[11px] h-[11px]" viewBox="0 0 12 12"><circle cx="5.500" cy="5.500" r="4" fill="#eef" stroke="#777883"/><path d="M4 4l3 3M7 4L4 7M8.500 8.500L11 11" stroke="#777883"/></svg></button>
          <button aria-label="Zoom area"><svg class="w-[11px] h-[11px]" viewBox="0 0 12 12"><path d="M1 1h8v8H1z" fill="none" stroke="#aaa" stroke-dasharray="1.500 1"/><circle cx="6" cy="5.500" r="3.500" fill="#eef" stroke="#777883"/><path d="M8.500 8.500L11 11" stroke="#777883"/></svg></button>
          <button aria-label="Previous view"><svg class="w-[12px] h-[11px]" viewBox="0 0 12 12"><path d="M1 2l6 5M11 1L2 10" stroke="#4a88c8" stroke-width="2"/><path d="M7 7l4 3" stroke="#2c5a98" stroke-width="2"/></svg></button>
          <button aria-label="Section view"><svg class="w-[11px] h-[11px]" viewBox="0 0 12 12"><path d="M1 2h9v9H1z" fill="#5a98cc"/><path d="M1 2v9M5 2v9M9 2v9" stroke="#e8cf3a" stroke-dasharray="2 1" stroke-width="1.500"/></svg></button>
          <button aria-label="View orientation"><svg class="w-[11px] h-[11px]" viewBox="0 0 12 12"><path d="M1 4l3-3h7v7l-3 3H1z" fill="#a8cdee" stroke="#2c4a78"/><path d="M1 4h7v7H1z" fill="#3c78b8"/></svg></button>
          <button aria-label="Display style" class="ml-[8px]"><svg class="w-[11px] h-[11px]" viewBox="0 0 12 12"><path d="M2 3l3-2h6v8l-3 2H2z" fill="#4c80bc" stroke="#28487c"/><path d="M2 3l3-2h6L8 3z" fill="#a8cdee"/></svg></button>
          <button aria-label="Hide or show" class="ml-[6px] flex items-center gap-[2px]"><svg class="w-[12px] h-[11px]" viewBox="0 0 12 12"><path d="M1 8c0-3 4-3 4 0s-4 2-4 0M7 8c0-3 4-3 4 0s-4 2-4 0M3 5l3-3M9 5l2-2" fill="none" stroke="#8b8c95" stroke-width="1.200"/></svg><svg class="w-[4px] h-[3px]"><use href="#caret"/></svg></button>
          <button aria-label="Appearance"><svg class="w-[11px] h-[11px]" viewBox="0 0 12 12"><circle cx="6" cy="6" r="5" fill="#a9aab0"/></svg></button>
          <button aria-label="Scene" class="flex items-center gap-[3px]"><svg class="w-[12px] h-[12px]"><use href="#ball"/></svg><svg class="w-[4px] h-[3px]"><use href="#caret"/></svg></button>
          <button aria-label="View settings" class="flex items-center gap-[3px]"><svg class="w-[12px] h-[12px]" viewBox="0 0 12 12"><path d="M1 2h10v7H1z" fill="#e8d8b8" stroke="#50515c"/><path d="M3 7l2-3 2 2 2-3M3 11h6" stroke="#a05838" fill="none"/></svg><svg class="w-[4px] h-[3px]"><use href="#caret"/></svg></button>
        </div>

        <!-- document window buttons -->
        <div class="absolute right-[7px] top-[5px] flex items-center gap-[5px]">
          <button aria-label="Tile left"><svg class="w-[10px] h-[9px]"><use href="#tile"/></svg></button>
          <button aria-label="Tile right"><svg class="w-[10px] h-[9px]"><use href="#tile"/></svg></button>
          <button aria-label="Minimize document"><svg class="w-[10px] h-[9px]"><use href="#mini"/></svg></button>
          <button aria-label="Restore document"><svg class="w-[11px] h-[9px]"><use href="#restore"/></svg></button>
          <button aria-label="Close document"><svg class="w-[10px] h-[9px]"><use href="#cross"/></svg></button>
        </div>

        <!-- confirmation corner -->
        <svg class="absolute right-[28px] top-[18px] w-[46px] h-[40px]" viewBox="0 0 46 40" fill="none"><path d="M14 2H3v12l4 3h7M3 12l12-7" stroke="#c3c4dc" stroke-width="1.500"/><path d="M6 11l11-5" stroke="#dcd8b8" stroke-width="2"/><path d="M18 10c6 1 6 8 1 11M15 19l4 5 3-6z" stroke="#c3c4dc" stroke-width="1.500" fill="#dcdcec"/><path d="M32 26l11 12M43 26L32 38" stroke="#e5b8bc" stroke-width="3"/></svg>

        <!-- task pane -->
        <div class="absolute right-0 top-[40px] w-[16px] flex flex-col">
          <button class="h-[16px] flex items-center justify-center rounded-l-sm border border-r-0 border-[#80818f] bg-[#c3c5d4]" aria-label="Resources"><svg class="w-[12px] h-[12px]" viewBox="0 0 12 12"><path d="M1 6l5-4 5 4M2.500 6v5h7V6" fill="#f6e08a" stroke="#8c6a1c"/><path d="M5 8h2v3H5z" fill="#8c6a1c"/></svg></button>
          <button class="h-[16px] flex items-center justify-center rounded-l-sm border border-r-0 border-[#80818f] bg-[#eeeef5]" aria-label="Design library"><svg class="w-[12px] h-[12px]" viewBox="0 0 12 12"><path d="M1 5h3v6H1z" fill="#2a9a40"/><path d="M4.500 3h3v8h-3z" fill="#e3bf34"/><path d="M8 1h3v10H8z" fill="#3e74b8"/></svg></button>
          <button class="h-[16px] flex items-center justify-center rounded-l-sm border border-r-0 border-[#80818f] bg-[#c3c5d4]" aria-label="File explorer"><svg class="w-[12px] h-[12px]" viewBox="0 0 12 12"><path d="M1 3h4l1 1h5v6L9 11H2z" fill="#f8de74" stroke="#94781c" stroke-width=".9"/></svg></button>
          <button class="h-[16px] flex items-center justify-center rounded-l-sm border border-r-0 border-[#80818f] bg-[#c3c5d4]" aria-label="View palette"><svg class="w-[12px] h-[12px]" viewBox="0 0 12 12"><path d="M1 1h10v7H1zM6 1v7M1 4.500h10" fill="#fff" stroke="#60718c"/><path d="M2 10h6M6.500 8.500L9 10l-2.500 1.500" stroke="#1c2ca8" fill="none"/></svg></button>
          <button class="h-[16px] flex items-center justify-center rounded-l-sm border border-r-0 border-[#80818f] bg-[#c3c5d4]" aria-label="Appearances"><svg class="w-[12px] h-[12px]"><use href="#ball"/></svg></button>
          <button class="h-[16px] flex items-center justify-center rounded-l-sm border border-r-0 border-[#80818f] bg-[#c3c5d4]" aria-label="Custom properties"><svg class="w-[12px] h-[12px]"><use href="#props"/></svg></button>
        </div>

        <!-- splitter handle -->
        <button class="absolute left-[-2px] top-[291px] w-[7px] h-[20px] rounded-r border border-[#6c6d7a] bg-[#d5d6e3] flex items-center justify-center" aria-label="Collapse panel"><svg class="w-[3px] h-[14px]" viewBox="0 0 3 14"><path d="M3 0v4L0 2zM3 5v4L0 7zM3 10v4l-3-2z" fill="#3a3b46"/></svg></button>
      </div>
    </main>

    <!-- document tabs -->
    <nav class="h-[12px] shrink-0 flex border-t border-[#6c6d7a] bg-[#e6e7f0] font-['Liberation_Sans',sans-serif] text-[8px] leading-[10px] text-center text-[#22232c]">
      <svg class="w-[45px] h-[11px] bg-[#b9bbc9]" viewBox="0 0 45 11"><path d="M11.500 0v11M22.500 0v11M33.500 0v11" stroke="#8f909d"/><path d="M4 3v5M9 3v5L5.500 5.500zM19 3v5l-3.500-2.500zM26 3v5l3.500-2.500zM36 3v5l3.500-2.500zM41 3v5" fill="#8f909d" stroke="#8f909d" stroke-width=".7"/></svg>
      <a href="#" class="w-[38px] border-x border-b border-[#50515c] bg-[#e3e4ee] font-bold">Model</a>
      <a href="#" class="w-[68px] border-r border-b border-[#50515c] bg-[#b9bbc9]">Motion Study 1</a>
    </nav>

    <!-- status bar -->
    <footer class="h-[12px] shrink-0 flex items-center pl-[2px] pr-[4px] border-t border-[#a2a3b1] bg-linear-to-b from-[#dcdde8] to-[#c2c4d4] text-[#22232c]">
      <p class="flex-1">Select a handle to modify parameters</p>
      <span class="w-[56px]">-104.57mm</span>
      <span class="w-[42px]">78.35mm</span>
      <span class="w-[33px]">0mm</span>
      <span class="w-[58px]">Fully Defined</span>
      <span class="w-[67px]">Editing Sketch4</span>
      <svg class="w-[6px] h-[10px] mr-[19px]"><use href="#light"/></svg>
      <span class="w-[28px] text-[#adaebb]">MMGS</span>
      <svg class="w-[4px] h-[3px] rotate-180 mr-[12px] text-[#adaebb]"><use href="#caret"/></svg>
      <button class="w-[9px] h-[10px] border border-[#3c7a58] bg-[#f4faf6] font-bold leading-[8px] text-[#1c7a3c] text-center mr-[33px]">?</button>
      <svg class="w-[11px] h-[11px]" viewBox="0 0 12 12"><path d="M1 8l6-7 4 3-6 7H2z" fill="#f2c63a" stroke="#8c6a1c" stroke-width=".8"/><path d="M4 8l4-5" stroke="#fff"/></svg>
    </footer>

    <!-- windows taskbar -->
    <footer class="h-[26px] shrink-0 flex bg-black text-white">
      <div class="flex w-[358px]">
        <button class="flex-1 flex items-center justify-center" aria-label="Start"><svg class="w-[12px] h-[12px]" viewBox="0 0 12 12"><path d="M0 1.700l5-.7v4.700H0zM5.600.9L12 0v5.700H5.600zM0 6.300h5V11l-5-.7zM5.600 6.300H12V12l-6.400-.9z" fill="#fff"/></svg></button>
        <button class="flex-1 flex items-center justify-center" aria-label="Cortana"><svg class="w-[12px] h-[12px]" viewBox="0 0 12 12"><circle cx="6" cy="6" r="4.500" fill="none" stroke="#fff" stroke-width="1.500"/></svg></button>
        <button class="flex-1 flex items-center justify-center" aria-label="Task view"><svg class="w-[14px] h-[11px]" viewBox="0 0 14 11"><path d="M3.500 1h7v9h-7zM2 2.500H.500v6H2M12 2.500h1.500v6H12" fill="none" stroke="#fff"/></svg></button>
        <button class="flex-1 flex items-center justify-center border-b-2 border-[#d89a88]" aria-label="Chrome"><svg class="w-[15px] h-[15px]" viewBox="0 0 16 16"><circle cx="8" cy="8" r="7.500" fill="#3aa757"/><path d="M8 8L1.500 4.200A7.500 7.500 0 0 1 14.500 4.500z" fill="#e2402f"/><path d="M8 8h0l6.500-3.500A7.500 7.500 0 0 1 8 15.500z" fill="#fbc816"/><circle cx="8" cy="8" r="3.600" fill="#fff"/><circle cx="8" cy="8" r="2.800" fill="#3f7de0"/></svg></button>
        <button class="flex-1 flex items-center justify-center" aria-label="Outlook"><svg class="w-[16px] h-[14px]" viewBox="0 0 16 14"><path d="M7 3h8.500v8H7z" fill="#e9f2fb" stroke="#1f74c4"/><path d="M7 3l4.500 4L15 3" fill="none" stroke="#1f74c4"/><path d="M0 1.500L9 0v14l-9-1.500z" fill="#1568b8"/><circle cx="4.500" cy="7" r="2.200" fill="none" stroke="#fff" stroke-width="1.300"/></svg></button>
        <button class="flex-1 flex items-center justify-center border-b-2 border-[#d89a88]" aria-label="File Explorer"><svg class="w-[15px] h-[13px]" viewBox="0 0 15 13"><path d="M0 0h6l1 2h8v11H0z" fill="#f3d56b"/><path d="M0 4h15v9H0z" fill="#fbe79a"/><path d="M3 7h9v6H10V9.500H5V13H3z" fill="#3ba4dc"/></svg></button>
        <button class="flex-1 flex items-center justify-center" aria-label="VLC"><svg class="w-[14px] h-[15px]" viewBox="0 0 14 15"><path d="M6 0h2l3.500 11h-9z" fill="#f08a1c"/><path d="M5 4h4l.8 2.500H4.200zM3.600 8.500h6.800L11 10.500H3z" fill="#fff"/><path d="M1.500 11h11l1.500 4H0z" fill="#f08a1c"/></svg></button>
        <button class="flex-1 flex items-center justify-center" aria-label="Calculator"><svg class="w-[14px] h-[13px]" viewBox="0 0 14 13"><path d="M.5.5h13v12H.5z" fill="#4a3a40" stroke="#c8c8c8"/><path d="M2 3h10" stroke="#ddd" stroke-width="2"/><path d="M2 6.500h3M6 6.500h3M10 6.500h2M2 9.500h3M6 9.500h3M10 9.500h2" stroke="#a89094" stroke-width="2"/></svg></button>
        <button class="flex-1 flex items-center justify-center" aria-label="Store"><svg class="w-[14px] h-[15px]" viewBox="0 0 14 15"><path d="M0 5l14-1.500V15L0 13.500z" fill="#fff"/><path d="M4 4.500C4 0 9.500 0 9.500 4" fill="none" stroke="#fff"/><path d="M3.500 6.500h3v2.700h-3zM7.300 6.300H11v2.900H7.300zM3.500 10h3v2.500h-3zM7.300 10H11v3H7.300z" fill="#111"/></svg></button>
        <button class="flex-1 flex items-center justify-center border-b-2 border-[#d89a88]" aria-label="Acrobat"><svg class="w-[14px] h-[14px]" viewBox="0 0 14 14"><path d="M0 0h14v14H0z" fill="#f4eeee"/><path d="M2 11c2-1 5-5 4.500-8.500C8 6.500 9.500 9 12 9 8.500 8 5 9.500 2 11z" fill="none" stroke="#c8282c"/></svg></button>
        <button class="flex-1 flex items-center justify-center border-b-2 border-[#e8a898] bg-[#3a3838]" aria-label="SolidWorks"><svg class="w-[16px] h-[15px]" viewBox="0 0 16 15"><path d="M0 3l6-3 10 2v9l-6 4-10-2z" fill="#d8242c"/><path d="M0 3l8 1.500L16 2M8 4.500V14" stroke="#8c1018" stroke-width=".7" fill="none"/><path d="M6 6H3.500c-1.500 0-1.500 2.500 0 2.500S6 11 4 11H2M8.500 6l1 5 1.500-3 1.500 3L14 5" fill="none" stroke="#fff" stroke-width="1.200"/></svg></button>
      </div>
      <div class="ml-auto flex items-center gap-[6px]">
        <svg class="w-[9px] h-[6px]" viewBox="0 0 9 6"><path d="M1 5l3.500-3.500L8 5" fill="none" stroke="#fff" stroke-width="1.200"/></svg>
        <svg class="w-[12px] h-[11px]" viewBox="0 0 12 11"><path d="M3.500 2h8v6h-8zM5 10h5M.500 1v4h2V1M1.500 5v5" fill="none" stroke="#e4e4e4"/></svg>
        <svg class="w-[11px] h-[10px]" viewBox="0 0 11 10"><path d="M1 3.500h1.500L5 1v8L2.500 6.500H1zM7 3.500q1 1.500 0 3M8.500 2q2 3 0 6" fill="none" stroke="#e4e4e4"/></svg>
        <svg class="w-[13px] h-[12px]" viewBox="0 0 13 12"><path d="M1 1h11v8H5l-2 2V9H1z" fill="#eee"/><path d="M3 3.500h7M3 6h5" stroke="#222"/><circle cx="10" cy="9" r="2.500" fill="#222" stroke="#eee" stroke-width=".8"/></svg>
        <time class="w-[40px] text-center text-[8px] leading-[11px]">10:20 PM<br>1/16/2016</time>
        <span class="w-[2px] self-stretch border-l border-[#555]"></span>
      </div>
    </footer>

    <script>
      // round shapes of the wheel are tessellated like the shaded model
      document.querySelectorAll('polygon[data-radius]').forEach((shape) => {
        const radius = Number(shape.dataset.radius);
        const sides = Number(shape.dataset.sides);
        const points = [];
        for (let i = 0; i < sides; i++) {
          const angle = (i / sides) * Math.PI * 2;
          points.push(`${(radius * Math.cos(angle)).toFixed(1)},${(radius * Math.sin(angle)).toFixed(1)}`);
        }
        shape.setAttribute('points', points.join(' '));
      });
    </script>
  </body>
</html>
